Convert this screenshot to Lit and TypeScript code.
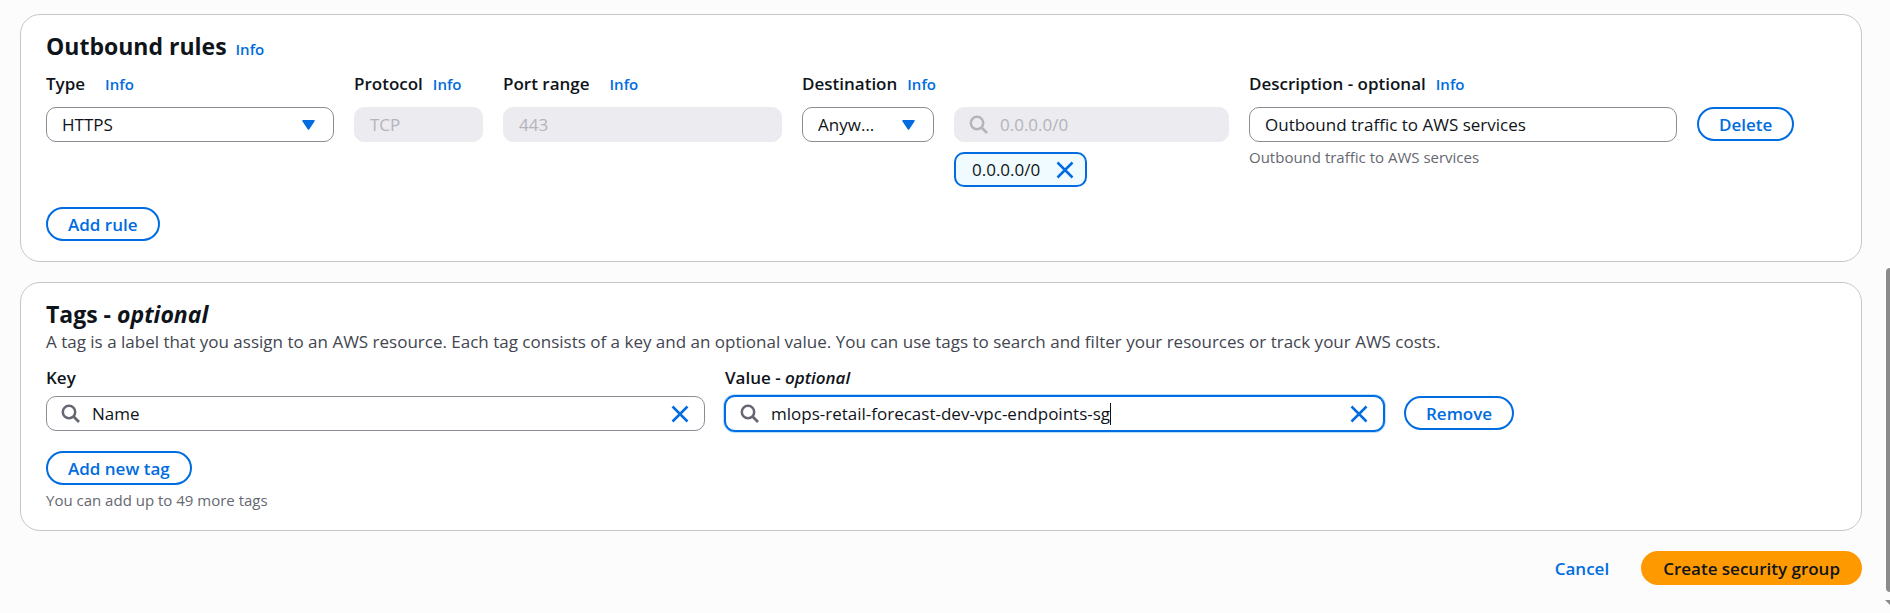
import { LitElement, html, css, svg, nothing } from "lit";
import { customElement, property, state } from "lit/decorators.js";

const searchIcon = svg`
  <svg class="icon search" viewBox="0 0 20 20" aria-hidden="true">
    <circle cx="8" cy="8" r="6.2" fill="none" stroke="currentColor" stroke-width="2.5"/>
    <path d="M12.3 12.3 L18 18" fill="none" stroke="currentColor" stroke-width="2.7"/>
  </svg>`;

const closeIcon = svg`
  <svg class="icon" viewBox="0 0 20 20" aria-hidden="true">
    <path d="M2.5 2.5 L17.5 17.5 M17.5 2.5 L2.5 17.5" fill="none" stroke="currentColor" stroke-width="2.5"/>
  </svg>`;

const caretIcon = svg`
  <svg class="caret-down" viewBox="0 0 13 10" aria-hidden="true">
    <path d="M1 0.8 H12 L6.5 9 Z" fill="currentColor" stroke="currentColor" stroke-width="1.5" stroke-linejoin="round"/>
  </svg>`;

const base = css`
  *,
  *::before,
  *::after {
    box-sizing: border-box;
  }
  button,
  input,
  select {
    font: inherit;
    color: inherit;
    margin: 0;
  }
  a {
    color: #006ce0;
    text-decoration: none;
  }
  .icon {
    display: block;
    flex: none;
    width: 20px;
    height: 20px;
  }
  .search {
    color: #656871;
  }
  .info {
    font-size: 15px;
    font-weight: 600;
  }
`;

const controls = css`
  .control {
    display: flex;
    align-items: center;
    gap: 10px;
    width: 100%;
    height: 35px;
    padding: 0 15px;
    border: 1px solid #8c8c94;
    border-radius: 10px;
    background: #fff;
  }
  .control input {
    flex: 1;
    min-width: 0;
    height: 25px;
    padding: 0;
    border: 0;
    outline: 0;
    background: transparent;
    line-height: 25px;
  }
  .control.disabled {
    border-color: #ebebf0;
    background: #ebebf0;
    color: #b4b4bb;
  }
  .control.disabled .search,
  .control input::placeholder {
    color: #b4b4bb;
  }
  .control.disabled input {
    opacity: 1;
    -webkit-text-fill-color: #b4b4bb;
  }
  .control.focused {
    border-color: #006ce0;
    box-shadow: 0 0 0 1px #006ce0, 0 0 0 2px #b8e0ff;
  }
  .control.focused input {
    flex: none;
    max-width: calc(100% - 60px);
    field-sizing: content;
  }
  .cursor {
    width: 1px;
    height: 22px;
    margin-left: -10px;
    background: #0f141a;
  }
  .clear {
    margin-left: auto;
    padding: 0;
    border: 0;
    background: transparent;
    color: #006ce0;
    cursor: pointer;
  }
`;

@customElement("search-box")
class SearchBox extends LitElement {
  static styles = [
    base,
    controls,
    css`
      :host {
        display: block;
      }
      .control {
        padding-right: 14px;
        padding-left: 14px;
        gap: 11px;
      }
      .cursor {
        margin-left: -11px;
      }
    `,
  ];

  @property() label = "";
  @property() value = "";
  @property() placeholder = "";
  @property({ type: Boolean }) disabled = false;
  @property({ type: Boolean }) active = false;

  private onInput(e: Event) {
    this.value = (e.target as HTMLInputElement).value;
  }

  render() {
    const cls = `control${this.disabled ? " disabled" : ""}${this.active ? " focused" : ""}`;
    return html`
      <div class=${cls}>
        ${searchIcon}
        <input
          type="text"
          aria-label=${this.label}
          placeholder=${this.placeholder}
          .value=${this.value}
          ?disabled=${this.disabled}
          @input=${this.onInput}
        />
        ${this.active ? html`<span class="cursor"></span>` : nothing}
        ${this.disabled
          ? nothing
          : html`<button class="clear" aria-label="Clear" @click=${() => (this.value = "")}>${closeIcon}</button>`}
      </div>
    `;
  }
}

@customElement("app-root")
class AppRoot extends LitElement {
  static styles = [
    base,
    controls,
    css`
      :host {
        display: flex;
        min-height: 100vh;
        background: #fcfcfd;
        color: #0f141a;
        font-family: "Open Sans", "Noto Sans", sans-serif;
        font-size: 17px;
        line-height: 25px;
      }
      main {
        flex: 1;
        min-width: 0;
        display: flex;
        flex-direction: column;
        gap: 20px;
        padding: 14px 23px 28px 20px;
      }
      .card {
        padding: 16px 25px 20px;
        border: 1px solid #c6c6cd;
        border-radius: 20px;
        background: #fff;
      }
      h2 {
        margin: 0;
        font-size: 23px;
        font-weight: 700;
        line-height: 30px;
      }
      h2 .info {
        margin-left: 3px;
      }
      .rule {
        display: grid;
        grid-template-columns:
          minmax(0, 288fr) minmax(0, 129fr) minmax(0, 279fr) minmax(0, 132fr)
          minmax(0, 275fr) minmax(0, 428fr) minmax(0, 139fr);
        column-gap: 20px;
        align-items: start;
        margin-top: 7px;
      }
      .head {
        display: flex;
        align-items: baseline;
        gap: 10px;
        height: 36px;
        white-space: nowrap;
      }
      .head.wide {
        gap: 20px;
      }
      .head label,
      .label {
        font-weight: 600;
      }
      .select {
        display: grid;
        align-items: center;
      }
      .select > * {
        grid-area: 1 / 1;
      }
      .select select {
        appearance: none;
        padding-right: 50px;
        text-overflow: ellipsis;
        white-space: nowrap;
        overflow: hidden;
        cursor: pointer;
      }
      .caret-down {
        justify-self: end;
        width: 13px;
        height: 10px;
        margin-right: 19px;
        color: #006ce0;
        pointer-events: none;
      }
      .token {
        display: inline-flex;
        align-items: center;
        gap: 15px;
        height: 35px;
        margin-top: 10px;
        padding: 0 10px 0 16px;
        border: 2px solid #006ce0;
        border-radius: 10px;
        background: #f0fbff;
      }
      .hint {
        color: #656871;
        font-size: 15px;
        line-height: 20px;
      }
      .rule .hint {
        margin-top: 5px;
      }
      .btn {
        height: 34px;
        padding: 0 20px;
        border: 2px solid #006ce0;
        border-radius: 17px;
        background: #fff;
        color: #006ce0;
        font-weight: 600;
        line-height: 25px;
        white-space: nowrap;
        cursor: pointer;
      }
      .btn.primary {
        border-color: #ff9900;
        background: #ff9900;
        color: #0f141a;
      }
      .btn.link {
        border-color: transparent;
        background: transparent;
      }
      .add {
        margin-top: 20px;
      }
      .description {
        margin: 0;
        color: #424650;
      }
      .tag {
        display: grid;
        grid-template-columns: minmax(0, 659fr) minmax(0, 659fr) minmax(0, 432fr);
        column-gap: 20px;
        row-gap: 6px;
        margin-top: 11px;
      }
      .tag search-box {
        grid-row: 2;
      }
      .tag .btn {
        grid-area: 2 / 3;
        justify-self: start;
      }
      .tags .hint {
        margin: 5px 0 0;
      }
      .actions {
        display: flex;
        justify-content: flex-end;
        gap: 10px;
      }
      .scrollbar {
        flex: none;
        display: flex;
        flex-direction: column;
        align-items: flex-end;
        width: 5px;
        overflow: hidden;
        color: #8b8b8b;
      }
      .track-above {
        flex: 268;
      }
      .thumb {
        flex: 324;
        width: 4px;
        border-radius: 4px 0 0 4px;
        background: currentColor;
      }
      .track-below {
        flex: 21;
        display: flex;
        align-items: center;
      }
    `,
  ];

  @state() private destinations = ["0.0.0.0/0"];

  private removeDestination(d: string) {
    this.destinations = this.destinations.filter((x) => x !== d);
  }

  private head(text: string, target: string, wide = false) {
    return html`<div class="head ${wide ? "wide" : ""}">
      <label for=${target}>${text}</label><a class="info" href="#">Info</a>
    </div>`;
  }

  render() {
    return html`
      <main>
        <section class="card">
          <h2>Outbound rules <a class="info" href="#">Info</a></h2>
          <div class="rule">
            <div>
              ${this.head("Type", "type", true)}
              <div class="select">
                <select id="type" class="control"><option>HTTPS</option></select>
                ${caretIcon}
              </div>
            </div>
            <div>
              ${this.head("Protocol", "protocol")}
              <div class="control disabled"><input id="protocol" value="TCP" disabled /></div>
            </div>
            <div>
              ${this.head("Port range", "port", true)}
              <div class="control disabled"><input id="port" value="443" disabled /></div>
            </div>
            <div>
              ${this.head("Destination", "destination")}
              <div class="select">
                <select id="destination" class="control"><option>Anywhere-IPv4</option></select>
                ${caretIcon}
              </div>
            </div>
            <div>
              <div class="head"></div>
              <search-box label="Destination CIDR" placeholder="0.0.0.0/0" disabled></search-box>
              ${this.destinations.map(
                (d) => html`<span class="token">${d}
                  <button class="clear" aria-label="Remove ${d}" @click=${() => this.removeDestination(d)}>${closeIcon}</button>
                </span>`
              )}
            </div>
            <div>
              ${this.head("Description - optional", "description")}
              <div class="control"><input id="description" value="Outbound traffic to AWS services" /></div>
              <div class="hint">Outbound traffic to AWS services</div>
            </div>
            <div>
              <div class="head"></div>
              <button class="btn">Delete</button>
            </div>
          </div>
          <button class="btn add">Add rule</button>
        </section>

        <section class="card tags">
          <h2>Tags - <em>optional</em></h2>
          <p class="description">
            A tag is a label that you assign to an AWS resource. Each tag consists of a key and an optional value. You can use tags to search and filter your resources or track your AWS costs.
          </p>
          <div class="tag">
            <div class="label">Key</div>
            <div class="label">Value - <em>optional</em></div>
            <search-box label="Key" value="Name"></search-box>
            <search-box label="Value - optional" value="mlops-retail-forecast-dev-vpc-endpoints-sg" active></search-box>
            <button class="btn">Remove</button>
          </div>
          <button class="btn add">Add new tag</button>
          <p class="hint">You can add up to 49 more tags</p>
        </section>

        <div class="actions">
          <button class="btn link">Cancel</button>
          <button class="btn primary">Create security group</button>
        </div>
      </main>
      <div class="scrollbar" aria-hidden="true">
        <div class="track-above"></div>
        <div class="thumb"></div>
        <div class="track-below">
          <svg width="5" height="5" viewBox="0 0 5 5"><path d="M0 0 H5 V5 Z" fill="currentColor"/></svg>
        </div>
      </div>
    `;
  }
}
